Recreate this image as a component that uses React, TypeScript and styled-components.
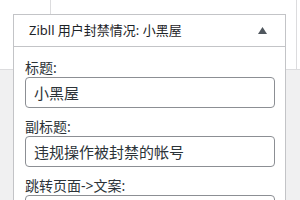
import styled, { createGlobalStyle } from "styled-components";

/***** Styled ******/
const GlobalStyle = createGlobalStyle`
  * {
    box-sizing: border-box;
  }
  body {
    margin: 0;
    font-family: "Noto Sans", "Noto Sans CJK SC", sans-serif;
    color: #1d2327;
  }
`;

const Page = styled.div`
  width: 300px;
  height: 200px;
  overflow: hidden;
  background:
    linear-gradient(#dcdcde, #dcdcde) 296px 0 / 1px 70px no-repeat,
    linear-gradient(to bottom, #fff 0 69px, #dcdcde 69px 70px, #f0f0f1 70px);
`;

const Stub = styled.div`
  height: 14px;
  margin-left: 50px;
  border-left: 1px solid #dcdcde;
`;

const Postbox = styled.section`
  width: 273px;
  margin-left: 13px;
  background: #fff;
  border: 1px solid #c3c4c7;
`;

const Header = styled.header`
  height: 32px;
  display: flex;
  align-items: center;
  justify-content: space-between;
  padding: 0 18px 0 15px;
  border-bottom: 1px solid #c3c4c7;
`;

const Title = styled.h2`
  margin: 0;
  font-size: 13px;
  font-weight: 400;
  line-height: 1;
  color: #1d2327;
`;

const Toggle = styled.span`
  display: flex;
  color: #50575e;
`;

const Body = styled.div`
  padding: 12px 10px 0 11px;
`;

const Field = styled.div`
  margin-bottom: 10px;
`;

const Label = styled.label`
  display: block;
  font-size: 14px;
  line-height: 18px;
  color: #2c3338;
`;

const Input = styled.input`
  display: block;
  width: 100%;
  height: 31px;
  margin: 0;
  padding: 0 8px;
  border: 1px solid #8c8f94;
  border-radius: 4px;
  background: #fff;
  font-family: "Noto Sans", "Noto Sans CJK SC", sans-serif;
  font-size: 15px;
  color: #2c3338;
  outline: none;
`;

/***** Data ******/
const fields = [
  { id: "title", label: "标题:", value: "小黑屋" },
  { id: "subtitle", label: "副标题:", value: "违规操作被封禁的帐号" },
  { id: "link", label: "跳转页面->文案:", value: "" },
];

function App() {
  return (
    <>
      <GlobalStyle />
      <Page>
        <Stub />
        <Postbox>
          <Header>
            <Title>Zibll 用户封禁情况: 小黑屋</Title>
            <Toggle>
              <svg width="9" height="7" viewBox="0 0 9 7">
                <path d="M4.5 0 L9 7 L0 7 Z" fill="currentColor" />
              </svg>
            </Toggle>
          </Header>
          <Body>
            {fields.map((f) => (
              <Field key={f.id}>
                <Label htmlFor={f.id}>{f.label}</Label>
                <Input id={f.id} defaultValue={f.value} readOnly />
              </Field>
            ))}
          </Body>
        </Postbox>
      </Page>
    </>
  );
}

export default App;
